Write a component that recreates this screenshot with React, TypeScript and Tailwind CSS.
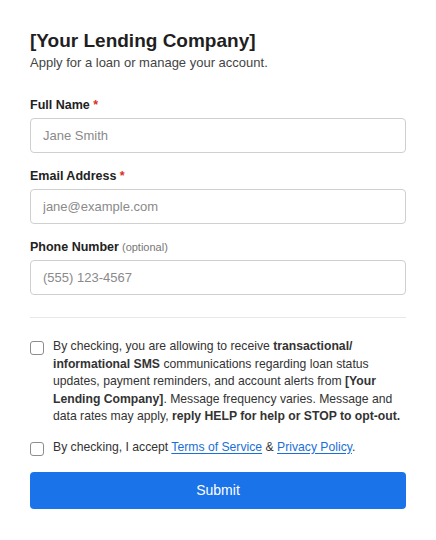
const fieldInput =
  "h-[35px] w-full rounded border border-[#cfcfcf] bg-white px-3 text-[13px] text-[#222] placeholder:text-[#8a8a8a] outline-none";

function Field({
  label,
  placeholder,
  required,
  optional,
  type = "text",
}: {
  label: string;
  placeholder: string;
  required?: boolean;
  optional?: boolean;
  type?: string;
}) {
  return (
    <div className="mb-[15px] flex flex-col">
      <label className="mb-[5px] text-[12.5px] leading-[16px] font-bold text-[#222]">
        {label}
        {required && <span className="text-[#d93025]"> *</span>}
        {optional && (
          <span className="text-[11px] font-normal text-[#777]"> (optional)</span>
        )}
      </label>
      <input type={type} placeholder={placeholder} className={fieldInput} />
    </div>
  );
}

function Box() {
  return (
    <input
      type="checkbox"
      className="mt-[3px] h-[14px] w-[14px] shrink-0 appearance-none rounded-[3px] border border-[#8d8d8d] bg-white"
    />
  );
}

export default function App() {
  return (
    <div
      className="min-h-[540px] bg-white px-[30px] pt-[29px] text-[#333]"
      style={{ fontFamily: "'Liberation Sans', Arial, sans-serif" }}
    >
      <h1 className="text-[19px] leading-[24px] font-bold text-[#1f1f1f]">
        [Your Lending Company]
      </h1>
      <p className="mt-[1px] text-[13px] leading-[18px] text-[#444]">
        Apply for a loan or manage your account.
      </p>

      <form className="mt-[25px]" onSubmit={(e) => e.preventDefault()}>
        <Field label="Full Name" placeholder="Jane Smith" required />
        <Field
          label="Email Address"
          placeholder="jane@example.com"
          type="email"
          required
        />
        <Field label="Phone Number" placeholder="(555) 123-4567" optional />

        <div className="mt-[22px] mb-[20px] h-px bg-[#e8e8e8]" />

        <label className="flex gap-[9px] text-[12.2px] leading-[17.5px] text-[#333]">
          <Box />
          <span>
            By checking, you are allowing to receive{" "}
            <b className="font-bold">transactional/ informational SMS</b>{" "}
            communications regarding loan status updates, payment reminders, and
            account alerts from <b className="font-bold">[Your Lending Company]</b>.
            Message frequency varies. Message and data rates may apply,{" "}
            <b className="font-bold">reply HELP for help or STOP to opt-out.</b>
          </span>
        </label>

        <label className="mt-[13px] flex gap-[9px] text-[12.2px] leading-[17.5px] text-[#333]">
          <Box />
          <span>
            By checking, I accept{" "}
            <a href="#" className="text-[#1a6fd8] underline underline-offset-2">
              Terms of Service
            </a>{" "}
            &amp;{" "}
            <a href="#" className="text-[#1a6fd8] underline underline-offset-2">
              Privacy Policy
            </a>
            .
          </span>
        </label>

        <button
          type="submit"
          className="mt-4 h-[37px] w-full rounded bg-[#1a73e8] text-[14px] font-medium text-white"
        >
          Submit
        </button>
      </form>
    </div>
  );
}
